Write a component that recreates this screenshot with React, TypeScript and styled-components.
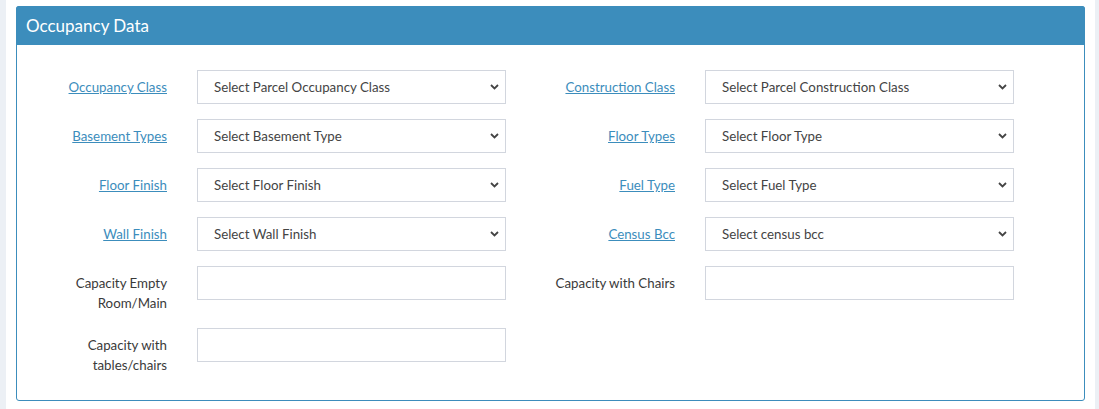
import styled, { createGlobalStyle } from 'styled-components';

const Global = createGlobalStyle`
  html, body {
    margin: 0;
    padding: 0;
    background: #ecf0f5;
    font-family: Lato, "Liberation Sans", sans-serif;
  }
`;

const Page = styled.div`
  margin: 0 4px 0 6px;
  padding: 6px 10px 8px;
  background: #fff;
  min-height: 409px;
  box-sizing: border-box;
`;

const Card = styled.section`
  border: 1px solid #3c8dbc;
  border-radius: 3px;
  background: #fff;
`;

const Header = styled.div`
  background: #3c8dbc;
  color: #fff;
  height: 39px;
  display: flex;
  align-items: center;
  padding: 0 10px;
  font-size: 17px;
  margin: -1px -1px 0;
  border-radius: 3px 3px 0 0;
`;

const Body = styled.div`
  padding: 25px 0 25px 2px;
  display: flex;
  flex-direction: column;
  gap: 15px;
`;

const Row = styled.div`
  display: flex;
`;

const Group = styled.div`
  width: 508px;
  display: flex;
  align-items: flex-start;
`;

const Label = styled.label<{ $link?: boolean }>`
  width: 148px;
  margin-right: 30px;
  padding-top: 7px;
  text-align: right;
  font-size: 13.3px;
  line-height: 20px;
  color: ${(p) => (p.$link ? '#3c8dbc' : '#3a3a3a')};
  text-decoration: ${(p) => (p.$link ? 'underline' : 'none')};
`;

const Control = styled.div`
  position: relative;
  width: 309px;
  height: 34px;
`;

const Select = styled.select`
  appearance: none;
  width: 100%;
  height: 100%;
  box-sizing: border-box;
  border: 1px solid #d2d6de;
  border-radius: 0;
  background: #fff;
  padding: 0 16px;
  font-family: inherit;
  font-size: 13.3px;
  color: #444;
  outline: none;
`;

const Input = styled.input`
  width: 100%;
  height: 100%;
  box-sizing: border-box;
  border: 1px solid #d2d6de;
  border-radius: 0;
  padding: 0 16px;
  font-family: inherit;
  font-size: 13.3px;
  outline: none;
`;

const Chevron = styled.svg`
  position: absolute;
  right: 7px;
  top: 14px;
  pointer-events: none;
`;

type F = { label: string; link?: boolean; placeholder?: string };

function Field({ label, link, placeholder }: F) {
  return (
    <Group>
      <Label $link={link}>{label}</Label>
      <Control>
        {placeholder ? (
          <>
            <Select defaultValue="">
              <option value="">{placeholder}</option>
            </Select>
            <Chevron width="9" height="6" viewBox="0 0 9 6">
              <path d="M1 1l3.5 3.5L8 1" fill="none" stroke="#444" strokeWidth="1.8" />
            </Chevron>
          </>
        ) : (
          <Input type="text" />
        )}
      </Control>
    </Group>
  );
}

export default function App() {
  return (
    <>
      <Global />
      <Page>
        <Card>
          <Header>Occupancy Data</Header>
          <Body>
            <Row>
              <Field label="Occupancy Class" link placeholder="Select Parcel Occupancy Class" />
              <Field label="Construction Class" link placeholder="Select Parcel Construction Class" />
            </Row>
            <Row>
              <Field label="Basement Types" link placeholder="Select Basement Type" />
              <Field label="Floor Types" link placeholder="Select Floor Type" />
            </Row>
            <Row>
              <Field label="Floor Finish" link placeholder="Select Floor Finish" />
              <Field label="Fuel Type" link placeholder="Select Fuel Type" />
            </Row>
            <Row>
              <Field label="Wall Finish" link placeholder="Select Wall Finish" />
              <Field label="Census Bcc" link placeholder="Select census bcc" />
            </Row>
            <Row>
              <Field label="Capacity Empty Room/Main" />
              <Field label="Capacity with Chairs" />
            </Row>
            <Row>
              <Field label="Capacity with tables/chairs" />
            </Row>
          </Body>
        </Card>
      </Page>
    </>
  );
}
